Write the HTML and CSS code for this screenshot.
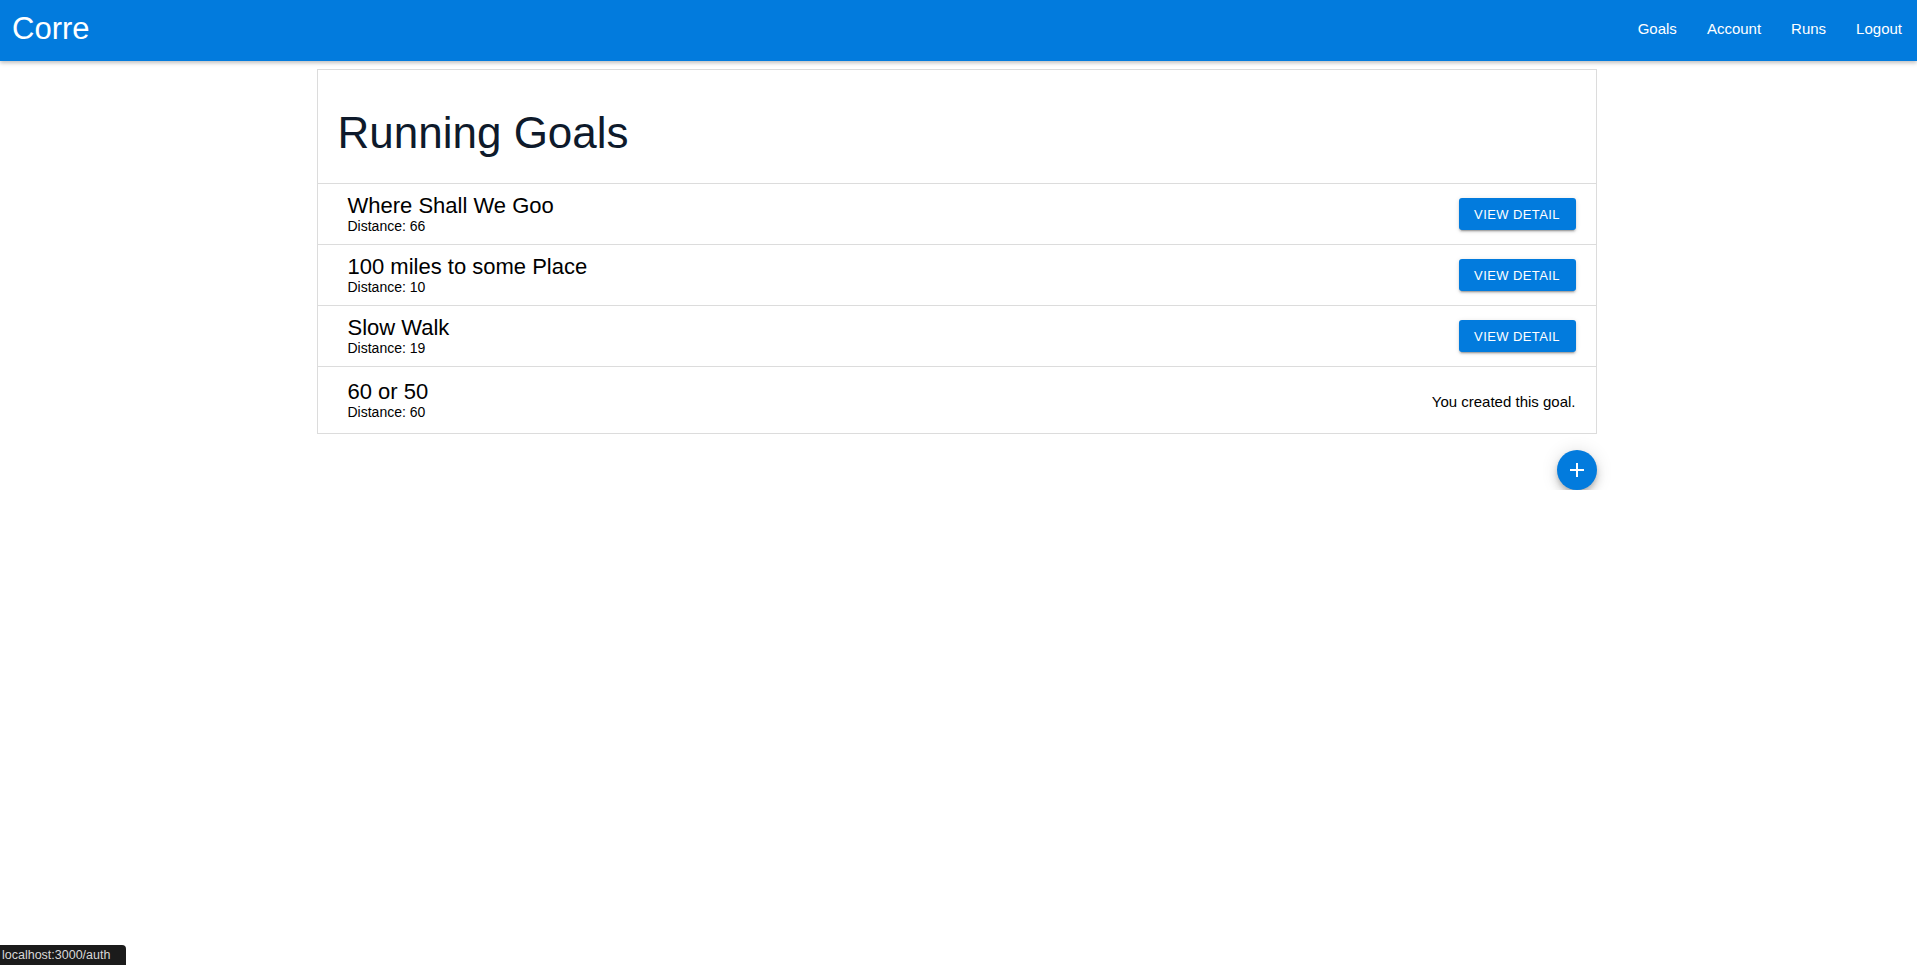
FILE: index.html
```html
<!DOCTYPE html>
<html lang="en">
<head>
<meta charset="utf-8">
<title>Corre</title>
<link rel="stylesheet" href="styles.css">
</head>
<body>
<header class="topbar">
  <div class="brand">Corre</div>
  <nav class="nav">
    <a class="nav-link" href="#">Goals</a>
    <a class="nav-link" href="#">Account</a>
    <a class="nav-link" href="#">Runs</a>
    <a class="nav-link" href="#">Logout</a>
  </nav>
</header>
<main class="container">
  <section class="card">
    <div class="card-head"><h1 class="title">Running Goals</h1></div>
    <div class="row">
      <div class="row-text">
        <div class="goal-name">Where Shall We Goo</div>
        <div class="goal-dist">Distance: 66</div>
      </div>
      <button class="btn">View Detail</button>
    </div>
    <div class="row">
      <div class="row-text">
        <div class="goal-name">100 miles to some Place</div>
        <div class="goal-dist">Distance: 10</div>
      </div>
      <button class="btn">View Detail</button>
    </div>
    <div class="row">
      <div class="row-text">
        <div class="goal-name">Slow Walk</div>
        <div class="goal-dist">Distance: 19</div>
      </div>
      <button class="btn">View Detail</button>
    </div>
    <div class="row row-last">
      <div class="row-text">
        <div class="goal-name">60 or 50</div>
        <div class="goal-dist">Distance: 60</div>
      </div>
      <div class="owner-note">You created this goal.</div>
    </div>
  </section>
  <div class="fab-row">
    <button class="fab" aria-label="Add goal">
      <svg width="24" height="24" viewBox="0 0 24 24"><path d="M19 13h-6v6h-2v-6H5v-2h6V5h2v6h6v2z" fill="#fff"/></svg>
    </button>
  </div>
</main>
<div class="status">localhost:3000/auth</div>
</body>
</html>
```
FILE: styles.css
```css
html, body {
  margin: 0;
  padding: 0;
  background: #fff;
  font-family: "Liberation Sans", Arial, Helvetica, sans-serif;
  color: #000;
}

.topbar {
  height: 61px;
  background: #027bdd;
  display: flex;
  align-items: center;
  justify-content: space-between;
  box-shadow: 0 2px 4px rgba(0, 0, 0, 0.25);
  position: relative;
  z-index: 2;
}

.brand {
  color: #fff;
  font-size: 31px;
  padding-left: 12px;
  line-height: 36px;
  margin-top: -4px;
}

.nav {
  display: flex;
  margin-top: -4px;
}

.nav-link {
  color: #fff;
  text-decoration: none;
  font-size: 15px;
  padding: 0 15px;
  line-height: 20px;
}

.container {
  width: 1280px;
  margin: 8px 0 0 calc(50% - 642px);
}

.card {
  border: 1px solid #dcdcdc;
  background: #fff;
}

.card-head {
  padding: 37px 20px 24px;
}

.title {
  margin: 0;
  font-size: 44px;
  font-weight: 400;
  line-height: 52px;
  color: #0e1a2b;
}

.row {
  display: flex;
  align-items: center;
  justify-content: space-between;
  min-height: 61px;
  padding: 0 20px 0 30px;
  border-top: 1px solid #dcdcdc;
  box-sizing: border-box;
}

.row-last {
  padding-top: 12px;
  padding-bottom: 11px;
  min-height: 67px;
}

.row-text {
  display: flex;
  flex-direction: column;
}

.goal-name {
  font-size: 22px;
  line-height: 24px;
}

.goal-dist {
  font-size: 14px;
  line-height: 17px;
}

.btn {
  background: #027bdd;
  color: #fff;
  border: 0;
  border-radius: 3px;
  width: 117px;
  height: 32px;
  font-family: "Liberation Sans", Arial, sans-serif;
  font-size: 13px;
  letter-spacing: 0.4px;
  text-transform: uppercase;
  box-shadow: 0 3px 1px -2px rgba(0,0,0,0.2), 0 2px 2px 0 rgba(0,0,0,0.14), 0 1px 5px 0 rgba(0,0,0,0.12);
  padding: 0;
}

.owner-note {
  font-size: 15px;
  margin-top: 2px;
}

.fab-row {
  display: flex;
  justify-content: flex-end;
  margin-top: 16px;
}

.fab {
  width: 40px;
  height: 40px;
  border-radius: 50%;
  border: 0;
  padding: 0;
  background: #027bdd;
  display: flex;
  align-items: center;
  justify-content: center;
  box-shadow: 0 3px 5px -1px rgba(0,0,0,0.2), 0 6px 10px 0 rgba(0,0,0,0.14), 0 1px 18px 0 rgba(0,0,0,0.12);
}

.status {
  position: fixed;
  left: 0;
  bottom: 0;
  height: 20px;
  line-height: 20px;
  padding: 0 16px 0 2px;
  background: #1b1b1b;
  color: #d8d8d8;
  font-size: 12.5px;
  border-top-right-radius: 4px;
}
```
